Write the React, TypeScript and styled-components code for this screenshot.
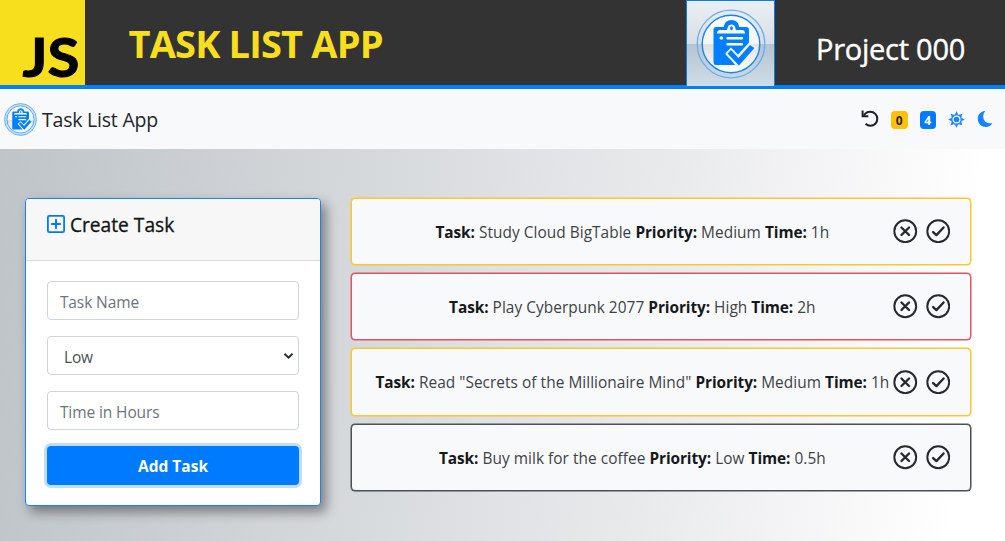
import React from "react";
import styled, { createGlobalStyle } from "styled-components";

const GlobalStyle = createGlobalStyle`
  * { box-sizing: border-box; }
  body { margin: 0; overflow: hidden; font-family: "Open Sans", "Noto Sans", sans-serif; color: #212529; }
`;

const Page = styled.div`
  display: flex;
  flex-direction: column;
  width: 1005px;
  height: 541px;
`;

const Banner = styled.header`
  display: flex;
  height: 89px;
  background: #333;
  border-bottom: 4px solid #0080ff;
`;

const JsLogo = styled.svg`
  display: block;
  width: 85px;
  height: 85px;
  overflow: visible;
  background: #f7df1e;
`;

const BannerTitle = styled.h1`
  flex: 1;
  margin: 0;
  padding-left: 43.5px;
  font-size: 38px;
  line-height: 87px;
  font-weight: 700;
  letter-spacing: -0.83px;
  white-space: nowrap;
  color: #f7df1e;
`;

const LogoTile = styled.div`
  display: flex;
  align-items: center;
  justify-content: center;
  width: 89px;
  height: 86px;
  border: 1px solid #0080ff;
  border-bottom: 0;
  background: linear-gradient(#ebeff3 0%, #d8dfe5 50%, #b5c4ce 51%, #cfdde7 100%);
`;

const ProjectName = styled.div`
  width: 230px;
  padding-left: 41px;
  font-size: 29px;
  font-weight: 500;
  -webkit-text-stroke: 0.4px #fff;
  line-height: 97px;
  letter-spacing: -0.25px;
  white-space: nowrap;
  color: #fff;
`;

const Navbar = styled.nav`
  display: flex;
  align-items: center;
  height: 60px;
  padding: 0 12px 0 4px;
  background: #f8f9fb;
`;

const Brand = styled.div`
  display: flex;
  align-items: center;
  flex: 1;
  gap: 5px;
  font-size: 19.5px;
  letter-spacing: -0.22px;
  svg { display: block; }
`;

const NavTools = styled.div`
  display: flex;
  align-items: center;
  gap: 12px;
  svg { display: block; }
`;

const Badge = styled.span<{ $bg: string; $fg: string }>`
  width: 16.500px;
  height: 18px;
  margin-top: 2px;
  border-radius: 4px;
  background: ${(p) => p.$bg};
  color: ${(p) => p.$fg};
  font-size: 12px;
  font-weight: 700;
  line-height: 19px;
  text-align: center;
`;

const Main = styled.main`
  display: flex;
  align-items: flex-start;
  gap: 30px;
  flex: 1;
  padding: 48.5px 34px 0 25.4px;
  background: linear-gradient(95deg, #bec4c8 0%, #e9eaec 65%, #ffffff 95%);
`;

const Card = styled.section`
  width: 295.3px;
  height: 308.5px;
  border: 1px solid #1583f5;
  border-radius: 4px;
  background: #fff;
  box-shadow: 5px 6px 12px rgba(0, 0, 0, 0.42);
`;

const CardHeader = styled.h2`
  display: flex;
  gap: 5px;
  height: 62px;
  margin: 0;
  padding: 12px 20.5px 0;
  border-bottom: 1px solid #dcdcdc;
  border-radius: 3px 3px 0 0;
  background: #f7f7f7;
  color: #111416;
  font-size: 19.2px;
  font-weight: 500;
  -webkit-text-stroke: 0.3px #111416;
  line-height: 27px;
  svg { display: block; margin-top: 4px; }
`;

const Form = styled.form`
  display: flex;
  flex-direction: column;
  gap: 16px;
  padding: 20.5px 20.5px 0;
`;

const Field = styled.div<{ $select?: boolean }>`
  display: flex;
  align-items: center;
  justify-content: space-between;
  height: 39px;
  padding: 3px 4px 0 ${(p) => (p.$select ? 16 : 12)}px;
  border: 1px solid #ced4da;
  border-radius: 4px;
  background: #fff;
  color: ${(p) => (p.$select ? "#495057" : "#6c757d")};
  font-size: 15.5px;
  letter-spacing: -0.1px;
  svg { display: block; margin-top: -3px; }
`;

const AddButton = styled.button`
  height: 39px;
  border: 0;
  border-radius: 4px;
  background: #007bff;
  box-shadow: 0 0 0 3px #bfdeff;
  color: #fff;
  font-family: inherit;
  font-size: 15.5px;
  font-weight: 700;
`;

const TaskList = styled.ul`
  display: flex;
  flex-direction: column;
  flex: 1;
  gap: 8px;
  margin: 0;
  padding: 0;
  list-style: none;
`;

const TaskItem = styled.li<{ $color: string }>`
  display: flex;
  align-items: center;
  height: 67.4px;
  padding: 0 20px 0 15px;
  border: 1px solid ${(p) => p.$color};
  border-radius: 4px;
  background: #f8f9fb;
  box-shadow: 0 0 0 0.5px ${(p) => p.$color};
`;

const TaskText = styled.div`
  flex: 1;
  padding: 2px 0 0 5px;
  color: #3d4247;
  font-size: 15.4px;
  font-weight: 400;
  letter-spacing: 0.05px;
  text-align: center;
  white-space: nowrap;
  b { font-weight: 700; color: #15181b; letter-spacing: -0.08px; }
`;

const Actions = styled.div`
  display: flex;
  gap: 8px;
  svg { display: block; }
`;

function TaskLogo({ size }: { size: number }) {
  return (
    <svg width={size} height={size} viewBox="0 0 70 70" fill="none">
      <defs>
        <linearGradient id="disc" x1="0" y1="0" x2="0" y2="1">
          <stop offset="0" stopColor="#fff" />
          <stop offset=".5" stopColor="#f3f4f6" />
          <stop offset=".51" stopColor="#dedfe1" />
          <stop offset="1" stopColor="#fff" />
        </linearGradient>
      </defs>
      <circle cx="35" cy="35" r="33.8" fill={size < 40 ? "#c9e1f8" : "none"} stroke="#65aef4" strokeWidth={size < 40 ? 2 : 1.3} />
      <circle cx="35" cy="35" r="28.8" fill="url(#disc)" stroke="#1683f5" strokeWidth="1.4" />
      <path
        fill="#0080ff"
        fillRule="evenodd"
        d="M20 18H28C28 14 31 11 35.500 11S43 14 43 18H50Q53 18 53 21V39L42 49L38 41L31 44L39 56H20Q17.500 56 17.500 53V20.500Q17.500 18 20 18ZM35.500 15.500C31.500 15.500 31.800 19.500 31 21H24Q21 21 21 24.500H49Q49 21 46 21H40C39.200 19.500 39.500 15.500 35.500 15.500Z"
      />
      <rect x="34.300" y="17.200" width="2.400" height="4" rx="1.200" fill="#0080ff" />
      <path d="M25 29h.8" stroke="#fff" strokeWidth="3" strokeLinecap="round" />
      <path d="M31.500 29.200H46M31.500 35.300H46" stroke="#fff" strokeWidth="2.400" strokeLinecap="round" />
      <path d="M29.500 44L35 38.500L42 45.500L54 32.500L61 39L43 59L29.500 45.500Z" fill="#f1f2f3" />
      <path d="M31.500 44.500L35 41L42.500 49L54 36L58.500 39L43 56.500Z" fill="#0080ff" />
    </svg>
  );
}

function UndoIcon() {
  return (
    <svg width="18" height="18" viewBox="0 0 18 18" fill="none" stroke="#1c2024" strokeWidth="2">
      <path d="M2.800 5.600C4.300 3 6.500 1.800 9.300 1.800C13.400 1.800 16.300 5 16.300 8.700C16.300 12.700 13.300 15.700 9.400 15.700C7.500 15.700 5.900 15 4.600 13.700" />
      <path d="M1.600 .6V6.200H7.300" />
    </svg>
  );
}

function CancelIcon() {
  return (
    <svg width="24.5" height="24.5" viewBox="0 0 24 24" fill="none" stroke="#24292e" strokeLinecap="round">
      <circle cx="12" cy="12" r="10.700" strokeWidth="1.900" />
      <path d="M8.300 8.300l7.400 7.400M15.700 8.300l-7.400 7.400" strokeWidth="2.300" />
    </svg>
  );
}

function DoneIcon() {
  return (
    <svg width="24.5" height="24.5" viewBox="0 0 24 24" fill="none" stroke="#24292e" strokeLinecap="round" strokeLinejoin="round">
      <circle cx="12" cy="12" r="10.700" strokeWidth="1.900" />
      <path d="M7 12.800l3.200 3L17.200 8.300" strokeWidth="2.300" />
    </svg>
  );
}

function SunIcon() {
  return (
    <svg width="17" height="17" viewBox="0 0 17 17" fill="none">
      {[0, 45, 90, 135, 180, 225, 270, 315].map((a) => (
        <path key={a} d="M8.500 .2L10.300 3.800H6.700Z" fill="#1685f8" transform={`rotate(${a} 8.500 8.500)`} />
      ))}
      <circle cx="8.500" cy="8.500" r="4.700" fill="#f8f9fb" stroke="#1685f8" strokeWidth="1.300" />
      <circle cx="8.500" cy="8.500" r="2.800" fill="#1685f8" />
    </svg>
  );
}

function MoonIcon() {
  return (
    <svg width="16" height="18" viewBox="0 0 16 18">
      <path d="M8.500 .8C2.500 1.500 .5 6 .8 9.500C1.200 14 4.800 17 8.800 17C11.800 17 14.200 15.500 15.300 13C10.500 14.300 6.800 11.500 6.300 7.500C6 5 6.800 2.500 8.500 .8Z" fill="#1685fb" />
    </svg>
  );
}

const priorityColor: Record<string, string> = {
  Low: "#4a4f55",
  Medium: "#fbc62f",
  High: "#dc5465",
};

const tasks = [
  { name: "Study Cloud BigTable", priority: "Medium", time: "1h" },
  { name: "Play Cyberpunk 2077", priority: "High", time: "2h" },
  { name: 'Read "Secrets of the Millionaire Mind"', priority: "Medium", time: "1h" },
  { name: "Buy milk for the coffee", priority: "Low", time: "0.5h" },
];

export default function App() {
  return (
    <>
      <GlobalStyle />
      <Page>
        <Banner>
          <JsLogo viewBox="0 0 85 85">
            <text x="22.500" y="77" fontFamily="Lato" fontWeight="700" fontSize="54" textLength="57" lengthAdjust="spacingAndGlyphs" stroke="#000" strokeWidth="1">
              JS
            </text>
          </JsLogo>
          <BannerTitle>TASK LIST APP</BannerTitle>
          <LogoTile>
            <TaskLogo size={70} />
          </LogoTile>
          <ProjectName>Project 000</ProjectName>
        </Banner>
        <Navbar>
          <Brand>
            <TaskLogo size={33} />
            <span>Task List App</span>
          </Brand>
          <NavTools>
            <UndoIcon />
            <Badge $bg="#ffc107" $fg="#212529">0</Badge>
            <Badge $bg="#007bff" $fg="#fff">4</Badge>
            <SunIcon />
            <MoonIcon />
          </NavTools>
        </Navbar>
        <Main>
          <Card>
            <CardHeader>
              <svg width="18" height="18" viewBox="0 0 18 18" fill="none" stroke="#007bff" strokeLinecap="round">
                <rect x=".9" y=".9" width="16.200" height="16.200" rx="1.300" strokeWidth="1.800" />
                <path d="M9 4.800v8.400M4.800 9h8.400" strokeWidth="1.900" />
              </svg>
              <span>Create Task</span>
            </CardHeader>
            <Form>
              <Field>Task Name</Field>
              <Field $select>
                Low
                <svg width="11" height="8" viewBox="0 0 11 8" fill="none">
                  <path d="M1.500 1.700L5.500 5.700L9.500 1.700" stroke="#2b3035" strokeWidth="2" />
                </svg>
              </Field>
              <Field>Time in Hours</Field>
              <AddButton type="button">Add Task</AddButton>
            </Form>
          </Card>
          <TaskList>
            {tasks.map((t) => (
              <TaskItem key={t.name} $color={priorityColor[t.priority]}>
                <TaskText>
                  <b>Task:</b> {t.name} <b>Priority:</b> {t.priority} <b>Time:</b> {t.time}
                </TaskText>
                <Actions>
                  <CancelIcon />
                  <DoneIcon />
                </Actions>
              </TaskItem>
            ))}
          </TaskList>
        </Main>
      </Page>
    </>
  );
}
